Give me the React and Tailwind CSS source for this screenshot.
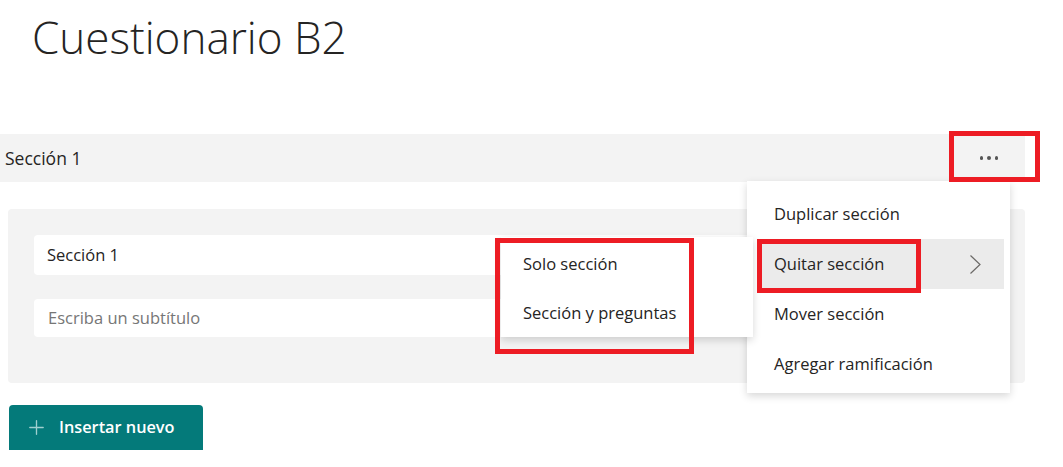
import { Plus } from 'lucide-react';

const Chevron = () => (
    <svg width="13" height="21" viewBox="0 0 13 21" fill="none">
        <path d="M1.5 1.5 L11 10.5 L1.5 19.5" stroke="#6b6967" strokeWidth="1.2" />
    </svg>
);

const MenuItem = ({ label, active, arrow }) => {
    if (active) {
        return (
            <div className="h-[50px] ml-[10px] mr-[6px] pl-[17px] pr-[22px] flex items-center justify-between bg-[#ebebeb] text-[16.5px] text-[#252423]">
                <span>{label}</span>
                {arrow && <Chevron />}
            </div>
        );
    }
    return (
        <div className="h-[50px] pl-[27px] flex items-center text-[16.5px] text-[#252423]">
            <span>{label}</span>
        </div>
    );
};

const App = () => {
    return (
        <div className="relative w-[1063px] h-[467px] bg-white overflow-hidden font-['Open_Sans',sans-serif]">
            {/* title */}
            <div className="h-[134px] pl-[32px] pt-[7px]">
                <h1 className="text-[44px] font-light text-[#252423] leading-[60px]">Cuestionario B2</h1>
            </div>

            {/* section header bar */}
            <div className="w-[1025px] h-[48px] bg-[#f3f3f3] flex items-center justify-between pl-[5px]">
                <span className="text-[17.5px] text-[#252423]">Sección 1</span>
                <div className="w-[72px] h-full flex items-center justify-center gap-[4px]">
                    <span className="w-[3.5px] h-[3.5px] rounded-full bg-[#555]"></span>
                    <span className="w-[3.5px] h-[3.5px] rounded-full bg-[#555]"></span>
                    <span className="w-[3.5px] h-[3.5px] rounded-full bg-[#555]"></span>
                </div>
            </div>

            {/* section card */}
            <div className="ml-[8px] mt-[27px] w-[1017px] h-[174px] bg-[#f3f3f3] rounded-[4px] pt-[26px] pl-[26px] pr-[24px] flex flex-col gap-[24px]">
                <div className="h-[40px] bg-white rounded-[4px] flex items-center pl-[13px] text-[16.5px] text-[#252423]">Sección 1</div>
                <div className="h-[38px] bg-white rounded-[4px] flex items-center pl-[14px] text-[16.5px] text-[#767676]">Escriba un subtítulo</div>
            </div>

            {/* insert button */}
            <div className="ml-[9px] mt-[22px] w-[194px] h-[45px] bg-[#047a7a] rounded-t-[4px] flex items-center pl-[16px] gap-[11px]">
                <Plus size={23} strokeWidth={1.4} className="text-[#9fd0cf]" />
                <span className="text-[16.3px] font-semibold text-white">Insertar nuevo</span>
            </div>

            {/* main dropdown menu */}
            <div className="absolute left-[747px] top-[181px] w-[263px] h-[212px] bg-white shadow-[0_3px_8px_rgba(0,0,0,0.16)] pt-[8px]">
                <MenuItem label="Duplicar sección" />
                <MenuItem label="Quitar sección" active arrow />
                <MenuItem label="Mover sección" />
                <MenuItem label="Agregar ramificación" />
            </div>

            {/* submenu */}
            <div className="absolute left-[501px] top-[237px] w-[252px] h-[100px] pt-[2px] bg-white shadow-[0_3px_8px_rgba(0,0,0,0.16)]">
                <div className="h-[50px] flex items-center pl-[22px] text-[16.5px] text-[#252423]">Solo sección</div>
                <div className="h-[48px] flex items-center pl-[22px] text-[16.5px] text-[#252423]">Sección y preguntas</div>
            </div>

            {/* annotation boxes */}
            <div className="absolute left-[949px] top-[131px] w-[91px] h-[51px] border-[5px] border-[#ed1c24]"></div>
            <div className="absolute left-[757px] top-[239px] w-[164px] h-[54px] border-[5px] border-[#ed1c24]"></div>
            <div className="absolute left-[495px] top-[238px] w-[199px] h-[116px] border-[5px] border-[#ed1c24]"></div>
        </div>
    );
};

export default App;
